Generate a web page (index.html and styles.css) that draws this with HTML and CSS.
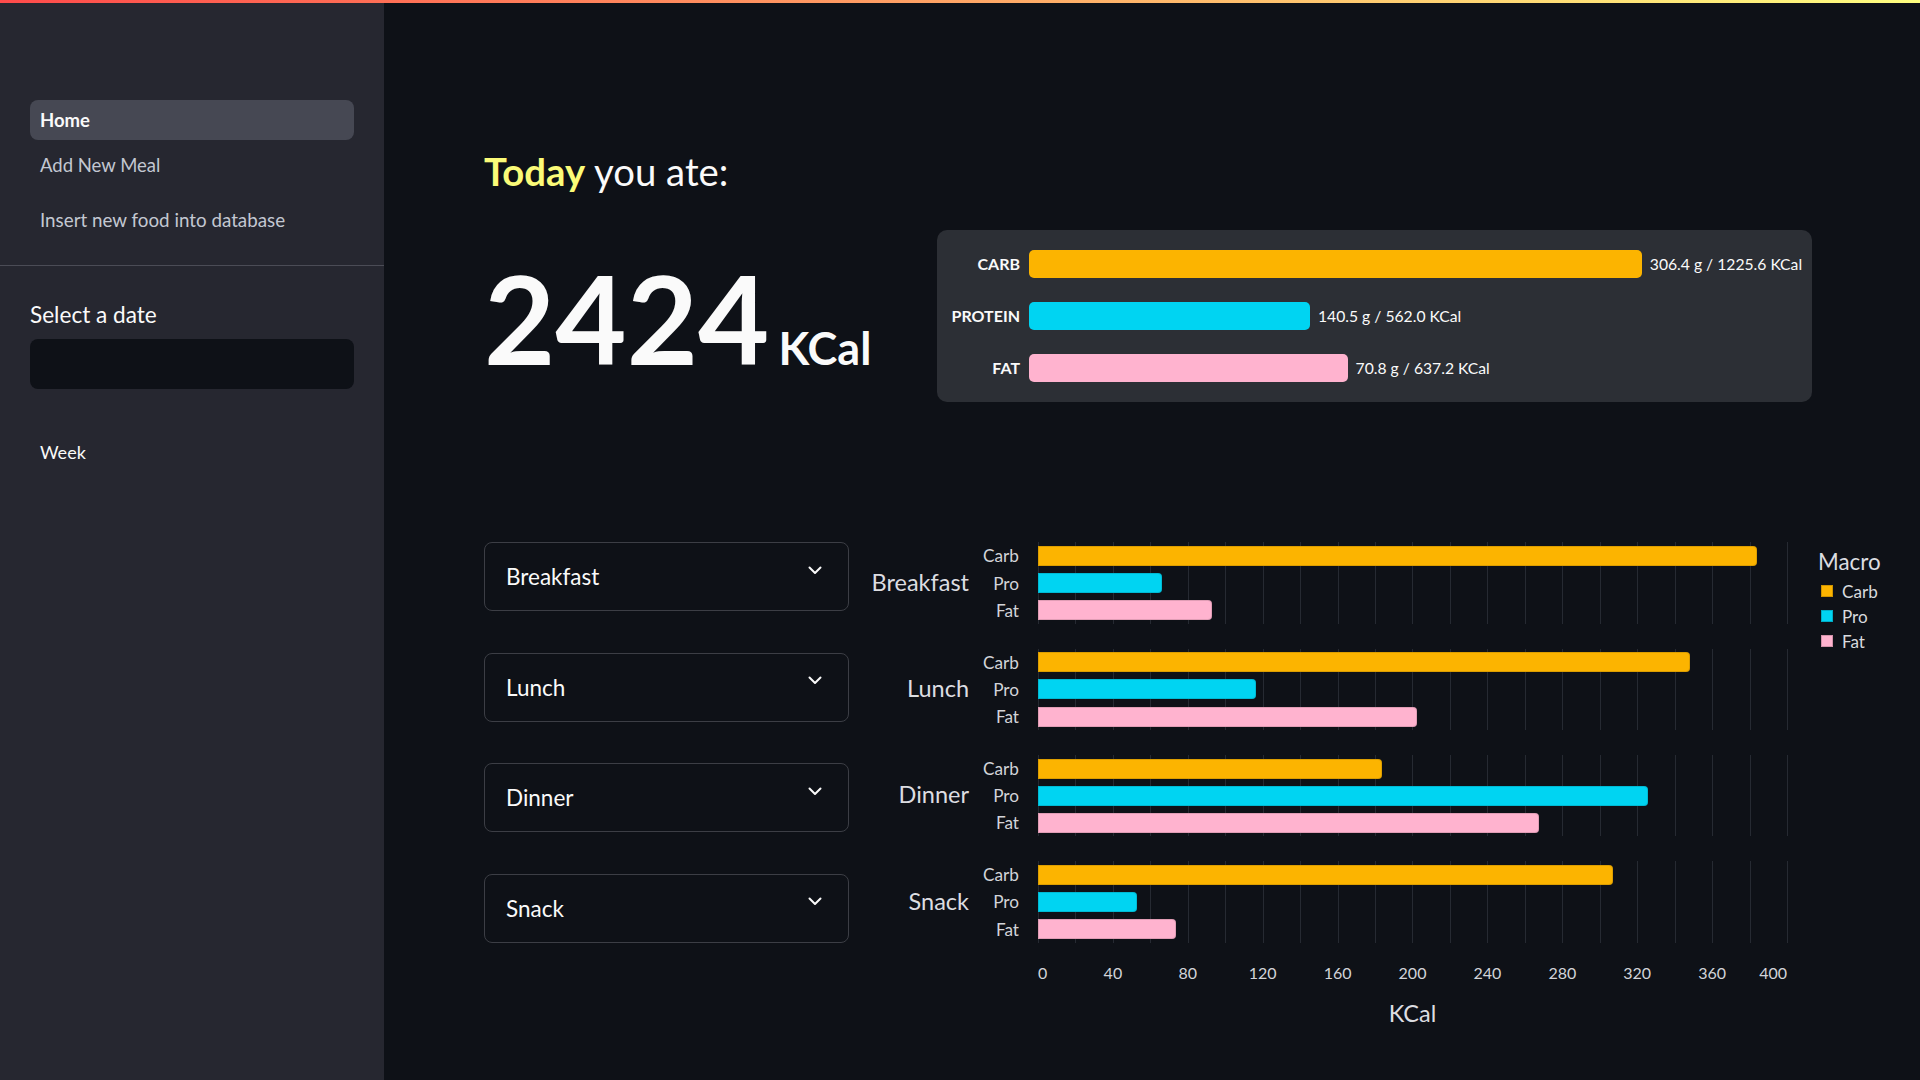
FILE: index.html
```html
<!DOCTYPE html>
<html lang="en">
<head>
<meta charset="utf-8">
<title>Home</title>
<link rel="stylesheet" href="styles.css">
</head>
<body>
<div class="topbar"></div>
<div class="app">
  <aside class="sidebar">
    <nav class="nav">
      <a class="nav-item active">Home</a>
      <a class="nav-item nav-add">Add New Meal</a>
      <a class="nav-item nav-insert">Insert new food into database</a>
    </nav>
    <div class="divider"></div>
    <div class="side-body">
      <h3 class="side-title">Select a date</h3>
      <div class="date-input"></div>
      <div class="week">Week</div>
    </div>
  </aside>

  <main class="main">
    <h1 class="title"><span class="hl">Today</span> you ate:</h1>

    <section class="summary">
      <div class="total">
        <span class="total-num">2424</span><span class="total-unit">KCal</span>
      </div>
      <div class="macro-card">
        <div class="mc-label">CARB</div>
        <div class="mc-track"><div class="mc-bar carb" style="width:612.8px"></div><span class="mc-value">306.4 g / 1225.6 KCal</span></div>
        <div class="mc-label">PROTEIN</div>
        <div class="mc-track"><div class="mc-bar pro" style="width:281px"></div><span class="mc-value">140.5 g / 562.0 KCal</span></div>
        <div class="mc-label">FAT</div>
        <div class="mc-track"><div class="mc-bar fat" style="width:318.6px"></div><span class="mc-value">70.8 g / 637.2 KCal</span></div>
      </div>
    </section>

    <section class="meals">
      <div class="meal-list">
        <div class="select"><span>Breakfast</span><svg class="chev" viewBox="0 0 14 9" width="14" height="9"><polyline points="1.5,1.5 7,7 12.5,1.5"/></svg></div>
        <div class="select"><span>Lunch</span><svg class="chev" viewBox="0 0 14 9" width="14" height="9"><polyline points="1.5,1.5 7,7 12.5,1.5"/></svg></div>
        <div class="select"><span>Dinner</span><svg class="chev" viewBox="0 0 14 9" width="14" height="9"><polyline points="1.5,1.5 7,7 12.5,1.5"/></svg></div>
        <div class="select"><span>Snack</span><svg class="chev" viewBox="0 0 14 9" width="14" height="9"><polyline points="1.5,1.5 7,7 12.5,1.5"/></svg></div>
      </div>

      <div class="chart">
        <div class="chart-body">
          <div class="group">
            <div class="g-label">Breakfast</div>
            <div class="s-labels"><span>Carb</span><span>Pro</span><span>Fat</span></div>
            <div class="plot">
              <div class="row"><div class="bar carb" style="width:718.7px"></div></div>
              <div class="row"><div class="bar pro" style="width:123.6px"></div></div>
              <div class="row"><div class="bar fat" style="width:173.8px"></div></div>
            </div>
          </div>
          <div class="group">
            <div class="g-label">Lunch</div>
            <div class="s-labels"><span>Carb</span><span>Pro</span><span>Fat</span></div>
            <div class="plot">
              <div class="row"><div class="bar carb" style="width:652px"></div></div>
              <div class="row"><div class="bar pro" style="width:218.3px"></div></div>
              <div class="row"><div class="bar fat" style="width:378.6px"></div></div>
            </div>
          </div>
          <div class="group">
            <div class="g-label">Dinner</div>
            <div class="s-labels"><span>Carb</span><span>Pro</span><span>Fat</span></div>
            <div class="plot">
              <div class="row"><div class="bar carb" style="width:344px"></div></div>
              <div class="row"><div class="bar pro" style="width:609.7px"></div></div>
              <div class="row"><div class="bar fat" style="width:501.3px"></div></div>
            </div>
          </div>
          <div class="group">
            <div class="g-label">Snack</div>
            <div class="s-labels"><span>Carb</span><span>Pro</span><span>Fat</span></div>
            <div class="plot">
              <div class="row"><div class="bar carb" style="width:575.2px"></div></div>
              <div class="row"><div class="bar pro" style="width:99px"></div></div>
              <div class="row"><div class="bar fat" style="width:138.4px"></div></div>
            </div>
          </div>

          <div class="axis">
            <span class="tick first" style="left:0%">0</span>
            <span class="tick" style="left:10%">40</span>
            <span class="tick" style="left:20%">80</span>
            <span class="tick" style="left:30%">120</span>
            <span class="tick" style="left:40%">160</span>
            <span class="tick" style="left:50%">200</span>
            <span class="tick" style="left:60%">240</span>
            <span class="tick" style="left:70%">280</span>
            <span class="tick" style="left:80%">320</span>
            <span class="tick" style="left:90%">360</span>
            <span class="tick last" style="left:100%">400</span>
          </div>
          <div class="axis-title">KCal</div>
        </div>

        <div class="legend">
          <div class="legend-title">Macro</div>
          <div class="legend-items">
            <div class="legend-item"><i class="sw carb"></i>Carb</div>
            <div class="legend-item"><i class="sw pro"></i>Pro</div>
            <div class="legend-item"><i class="sw fat"></i>Fat</div>
          </div>
        </div>
      </div>
    </section>
  </main>
</div>
</body>
</html>
```
FILE: styles.css
```css
* { box-sizing: border-box; }

html, body {
  margin: 0;
  padding: 0;
  height: 100%;
}

body {
  background: #0e1117;
  color: #fafafa;
  font-family: "Lato", "Noto Sans", sans-serif;
  overflow: hidden;
}

.topbar {
  position: fixed;
  top: 0;
  left: 0;
  right: 0;
  height: 3px;
  background: linear-gradient(90deg, #ff4b4b, #ffff80);
  z-index: 10;
}

.app {
  display: flex;
  height: 100vh;
}

/* ---------- Sidebar ---------- */
.sidebar {
  width: 384px;
  flex: 0 0 384px;
  background: #262730;
}

.nav {
  display: flex;
  flex-direction: column;
  padding: 100px 30px 0;
}

.nav-item {
  display: block;
  height: 40px;
  line-height: 40px;
  padding-left: 10px;
  border-radius: 8px;
  font-size: 18.5px;
  color: #c3c8d2;
}

.nav-item.active {
  background: #464853;
  color: #fafafa;
  font-weight: 700;
}

.nav-add { margin-top: 5px; }
.nav-insert { margin-top: 15px; font-size: 18.8px; }

.divider {
  height: 1px;
  margin-top: 25px;
  background: #4b4c56;
}

.side-body {
  padding: 0 30px;
}

.side-title {
  margin: 35px 0 0;
  font-size: 22.6px;
  line-height: 27px;
  font-weight: 400;
  color: #fafafa;
}

.date-input {
  margin-top: 11px;
  height: 50px;
  border-radius: 8px;
  background: #0e1117;
}

.week {
  margin-top: 43px;
  padding-left: 10px;
  line-height: 40px;
  font-size: 18px;
  color: #fafafa;
}

/* ---------- Main ---------- */
.main {
  flex: 1;
  padding: 149px 0 0 100px;
}

.title {
  margin: 0;
  font-size: 38.3px;
  line-height: 45.6px;
  font-weight: 400;
  color: #fafafa;
}

.title .hl {
  color: #fbfb78;
  font-weight: 700;
}

.summary {
  display: flex;
  align-items: flex-start;
  margin-top: 35.4px;
}

.total {
  width: 453px;
  flex: 0 0 453px;
  display: flex;
  align-items: baseline;
  margin-top: 26px;
  line-height: 1;
}

.total-num {
  font-size: 123px;
  font-weight: 700;
}

.total-unit {
  margin-left: 9px;
  font-size: 45px;
  font-weight: 700;
}

.macro-card {
  width: 875px;
  background: #2c2f35;
  border-radius: 10px;
  padding: 20px 10px 20px 14px;
  display: grid;
  grid-template-columns: 69px 1fr;
  column-gap: 9px;
  row-gap: 23.5px;
}

.mc-label {
  height: 28.5px;
  line-height: 28.5px;
  text-align: right;
  font-size: 16px;
  font-weight: 700;
  color: #fafafa;
}

.mc-track {
  display: flex;
  align-items: center;
  height: 28.5px;
}

.mc-bar {
  height: 28.5px;
  border-radius: 5px;
}

.mc-value {
  margin-left: 8px;
  font-size: 15.7px;
  color: #fafafa;
  white-space: nowrap;
}

.carb { background: #fcb400; }
.pro { background: #00d4f2; }
.fat { background: #ffb3cf; }

/* ---------- Meals ---------- */
.meals {
  display: flex;
  align-items: flex-start;
  margin-top: 140px;
}

.meal-list {
  width: 365px;
  flex: 0 0 365px;
  display: flex;
  flex-direction: column;
  gap: 41.5px;
}

.select {
  height: 69px;
  border: 1px solid #3c3e45;
  border-radius: 8px;
  display: flex;
  align-items: center;
  justify-content: space-between;
  padding: 0 26px 0 21px;
  font-size: 22.5px;
  color: #fafafa;
}

.chev {
  margin-bottom: 13px;
  fill: none;
  stroke: #fafafa;
  stroke-width: 2;
  stroke-linecap: round;
  stroke-linejoin: round;
}

.chart {
  display: flex;
  align-items: flex-start;
  margin-left: 10px;
}

.chart-body {
  display: flex;
  flex-direction: column;
  gap: 25px;
}

.group {
  display: grid;
  grid-template-columns: 110px 50px 750px;
  align-items: center;
}

.g-label {
  text-align: right;
  font-size: 23.5px;
  line-height: 28px;
  margin-bottom: 3px;
  color: #dcdde1;
}

.s-labels {
  display: flex;
  flex-direction: column;
  text-align: right;
  font-size: 17.2px;
  color: #d2d4d9;
}

.s-labels span {
  line-height: 27.1px;
}

.plot {
  margin-left: 19px;
  width: 750px;
  height: 81.3px;
  background-image: repeating-linear-gradient(90deg, #262a32 0 1px, transparent 1px 37.45px);
}

.row {
  height: 27.1px;
  display: flex;
  align-items: center;
}

.bar {
  height: 20px;
  border-radius: 0 4px 4px 0;
  box-shadow: inset 0 0 0 1px rgba(0, 0, 0, 0.12);
}

.axis {
  position: relative;
  margin: -5px 0 0 179px;
  width: 749px;
  height: 20px;
  font-size: 16px;
  line-height: 20px;
  color: #d2d4d9;
}

.tick {
  position: absolute;
  top: 0;
  transform: translateX(-50%);
}

.tick.first { transform: none; }
.tick.last { transform: translateX(-100%); }

.axis-title {
  margin: -9px 0 0 179px;
  width: 749px;
  text-align: center;
  font-size: 23.5px;
  line-height: 28px;
  color: #dcdde1;
}

.legend {
  margin: 6px 0 0 31px;
}

.legend-title {
  font-size: 22.4px;
  line-height: 27px;
  color: #dcdde1;
}

.legend-items {
  margin-top: 3.5px;
}

.legend-item {
  display: flex;
  align-items: center;
  height: 25px;
  font-size: 17.1px;
  color: #d8dade;
}

.sw {
  width: 12px;
  height: 12px;
  margin: 0 9px 0 3px;
  box-shadow: inset 0 0 0 1px rgba(0, 0, 0, 0.18);
}
```
